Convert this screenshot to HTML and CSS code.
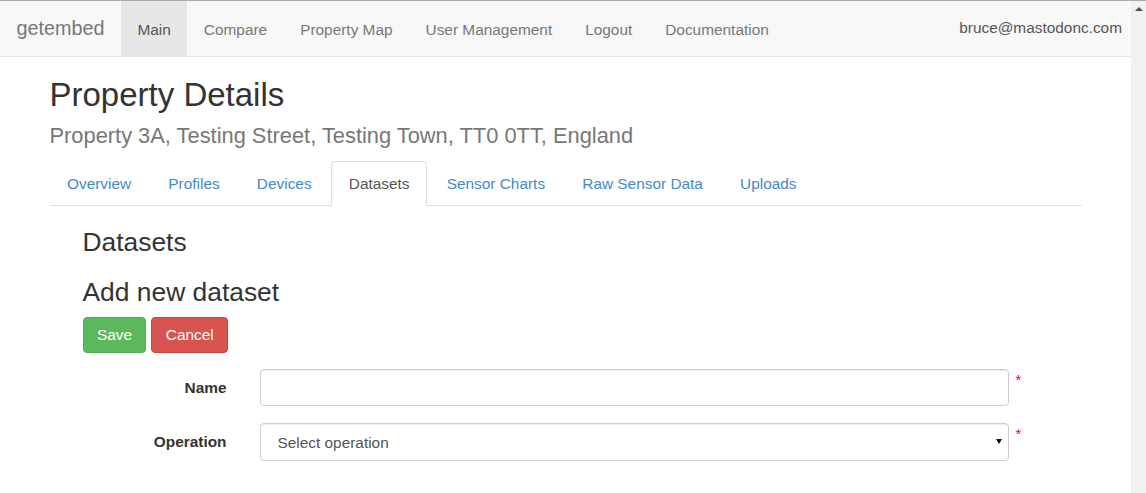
FILE: index.html
```html
<!DOCTYPE html>
<html lang="en">
<head>
<meta charset="utf-8">
<title>getembed - Property Details</title>
<link rel="stylesheet" href="styles.css">
</head>
<body>
<div class="page">
  <nav class="navbar">
    <a class="brand" href="#">getembed</a>
    <ul class="nav-links">
      <li class="active"><a href="#">Main</a></li>
      <li><a href="#">Compare</a></li>
      <li><a href="#">Property Map</a></li>
      <li><a href="#">User Management</a></li>
      <li><a href="#">Logout</a></li>
      <li><a href="#">Documentation</a></li>
    </ul>
    <div class="nav-user">bruce@mastodonc.com</div>
  </nav>

  <main class="container">
    <h1 class="page-title">Property Details</h1>
    <h2 class="page-subtitle">Property 3A, Testing Street, Testing Town, TT0 0TT, England</h2>

    <ul class="tabs">
      <li><a href="#">Overview</a></li>
      <li><a href="#">Profiles</a></li>
      <li><a href="#">Devices</a></li>
      <li class="active"><a href="#">Datasets</a></li>
      <li><a href="#">Sensor Charts</a></li>
      <li><a href="#">Raw Sensor Data</a></li>
      <li><a href="#">Uploads</a></li>
    </ul>

    <section class="tab-pane">
      <h3 class="section-title">Datasets</h3>
      <h3 class="section-title">Add new dataset</h3>
      <div class="actions">
        <button class="btn btn-save" type="button">Save</button>
        <button class="btn btn-cancel" type="button">Cancel</button>
      </div>
      <form class="form">
        <div class="form-row">
          <label class="form-label" for="name">Name</label>
          <input class="form-control" id="name" type="text">
          <span class="req">*</span>
        </div>
        <div class="form-row">
          <label class="form-label" for="operation">Operation</label>
          <div class="select-wrap">
            <select class="form-control form-select" id="operation">
              <option>Select operation</option>
            </select>
          </div>
          <span class="req">*</span>
        </div>
      </form>
    </section>
  </main>
</div>
<div class="scrollbar" aria-hidden="true"><span class="scroll-up"></span></div>
</body>
</html>
```

FILE: styles.css
```css
* { box-sizing: border-box; }

html, body {
  margin: 0;
  padding: 0;
}

body {
  font-family: "Liberation Sans", Arial, sans-serif;
  font-size: 15.4px;
  color: #333;
  background: #fff;
  overflow: hidden;
}

a { text-decoration: none; }

.page {
  margin-right: 15px;
}

/* Fake window scrollbar (overlay at the right edge) */
.scrollbar {
  position: fixed;
  top: 0;
  right: 0;
  width: 15px;
  height: 100vh;
  background: #f1f1f1;
  border-top: 1px solid #a9a9a9;
}

.scroll-up {
  position: absolute;
  top: 6px;
  left: 3.5px;
  border-left: 4px solid transparent;
  border-right: 4px solid transparent;
  border-bottom: 4px solid #505050;
}

/* Navbar */
.navbar {
  display: flex;
  align-items: flex-start;
  background: #f8f8f8;
  border-top: 1px solid #a9a9a9;
  border-bottom: 1px solid #e7e7e7;
  height: 57px;
}

.brand {
  display: block;
  font-size: 19.8px;
  line-height: 21px;
  color: #777;
  padding: 16.5px 16.5px 17.5px;
}

.nav-links {
  display: flex;
  list-style: none;
  margin: 0;
  padding: 0;
}

.nav-links a {
  display: block;
  height: 55px;
  padding: 17.5px 16.5px 16.5px;
  line-height: 21px;
  font-size: 15.4px;
  color: #777;
}

.nav-links .active a {
  background: #e7e7e7;
  color: #555;
}

.nav-user {
  margin-left: auto;
  padding: 16px 9px 0 0;
  line-height: 21px;
  font-size: 15.4px;
  color: #555;
}

/* Page */
.container {
  width: 1032px;
  margin: 0 auto;
  padding-bottom: 20px;
}

.page-title {
  margin: 20px 0 0;
  font-size: 33px;
  font-weight: 400;
  line-height: 36.3px;
  color: #333;
}

.page-subtitle {
  margin: 11px 0 12.5px;
  font-size: 21.85px;
  font-weight: 400;
  line-height: 24.2px;
  color: #777;
}

/* Tabs */
.tabs {
  display: flex;
  list-style: none;
  margin: 0;
  padding: 0;
  border-bottom: 1px solid #ddd;
}

.tabs li {
  margin: 0 2.2px -1px 0;
}

.tabs a {
  display: block;
  padding: 11px 16.5px;
  line-height: 21px;
  font-size: 15.4px;
  color: #428bca;
  border: 1px solid transparent;
  border-radius: 4px 4px 0 0;
}

.tabs .active a {
  color: #555;
  background: #fff;
  border-color: #ddd #ddd transparent;
}

/* Tab pane */
.tab-pane {
  padding-left: 33px;
}

.section-title {
  margin: 22px 0 10.8px;
  font-size: 26.4px;
  font-weight: 400;
  line-height: 28.6px;
  color: #333;
}

.section-title + .section-title {
  margin-top: 21px;
}

.actions {
  display: flex;
  gap: 5px;
}

.btn {
  font-family: inherit;
  font-size: 15.4px;
  line-height: 21px;
  padding: 6.5px 13.4px;
  border: 1px solid transparent;
  border-radius: 4px;
  color: #fff;
  cursor: pointer;
}

.btn-save {
  background: #5cb85c;
  border-color: #4cae4c;
}

.btn-cancel {
  background: #d9534f;
  border-color: #d43f3a;
}

/* Form */
.form {
  margin-top: 16px;
}

.form-row {
  display: grid;
  grid-template-columns: 144px 749px auto;
  column-gap: 33px;
  margin-bottom: 17px;
  align-items: start;
}

.form-label {
  text-align: right;
  font-weight: 700;
  font-size: 15.4px;
  line-height: 21px;
  padding-top: 8px;
  color: #333;
}

.form-control {
  display: block;
  width: 100%;
  height: 37.4px;
  padding: 7px 13px;
  font-family: inherit;
  font-size: 15.4px;
  line-height: 21px;
  color: #555;
  background: #fff;
  border: 1px solid #ccc;
  border-radius: 4px;
  box-shadow: inset 0 1px 1px rgba(0, 0, 0, .075);
}

.select-wrap {
  position: relative;
}

.form-select {
  appearance: none;
  -webkit-appearance: none;
  padding-left: 17px;
}

.select-wrap::after {
  content: "";
  position: absolute;
  right: 7px;
  top: 16px;
  border-left: 3px solid transparent;
  border-right: 3px solid transparent;
  border-top: 5px solid #111;
  pointer-events: none;
}

.req {
  margin-left: -26px;
  margin-top: 4px;
  font-size: 15px;
  line-height: 14px;
  color: #f00;
}
```
